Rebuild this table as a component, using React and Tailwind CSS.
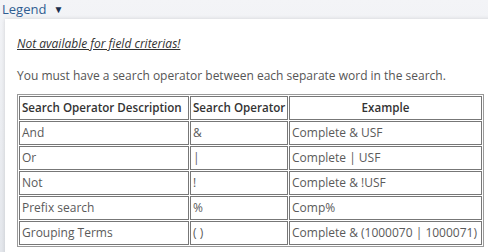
// Légende des opérateurs de recherche
const lignes = [
  { desc: "And", op: "&", ex: "Complete & USF" },
  { desc: "Or", op: "|", ex: "Complete | USF" },
  { desc: "Not", op: "!", ex: "Complete & !USF" },
  { desc: "Prefix search", op: "%", ex: "Comp%" },
  { desc: "Grouping Terms", op: "( )", ex: "Complete & (1000070 | 1000071)" },
];

export default function App() {
  return (
    <div
      className="w-[488px] h-[252px] overflow-hidden bg-gradient-to-b from-[#f3f4f7] to-[#e4e7ec]"
      style={{ fontFamily: '"Open Sans", sans-serif' }}
    >
      {/* Titre repliable */}
      <div className="flex items-center h-[19px] pl-[2px] text-[13px] text-[#2f5d92]">
        <span>Legend</span>
        <span className="ml-[7px] text-[10px] text-[#1a2f4f]">▼</span>
      </div>

      {/* Carte blanche */}
      <div className="ml-[5px] w-[500px] bg-white shadow-[0_0_4px_rgba(0,0,0,0.14)] pl-[12px] pt-[17px] pb-[10px]">
        <p className="text-[12px] leading-[16px] italic underline text-[#333]">
          Not available for field criterias!
        </p>
        <p className="mt-[16px] text-[12px] leading-[16px] text-[#555]">
          You must have a search operator between each separate word in the search.
        </p>

        <table className="mt-[10px] w-[467px] table-fixed border-separate border-spacing-[1px] border border-[#9a9a9a] text-[12px]">
          <colgroup>
            <col className="w-[170px]" />
            <col className="w-[98px]" />
            <col className="w-[193px]" />
          </colgroup>
          <thead>
            <tr>
              <th className="h-[24px] border border-[#777] px-[2px] text-left text-[11.6px] font-semibold text-[#333] whitespace-nowrap">
                Search Operator Description
              </th>
              <th className="h-[24px] border border-[#777] px-[2px] text-left text-[11.6px] font-semibold text-[#333] whitespace-nowrap">
                Search Operator
              </th>
              <th className="h-[24px] border border-[#777] px-[2px] text-center text-[11.6px] font-semibold text-[#333]">
                Example
              </th>
            </tr>
          </thead>
          <tbody>
            {lignes.map((l) => (
              <tr key={l.desc}>
                <td className="h-[24px] border border-[#777] px-[2px] text-[#5a5a5a]">{l.desc}</td>
                <td className="h-[24px] border border-[#777] px-[2px] text-[#5a5a5a]">{l.op}</td>
                <td className="h-[24px] border border-[#777] px-[2px] text-[#5a5a5a] whitespace-nowrap">{l.ex}</td>
              </tr>
            ))}
          </tbody>
        </table>
      </div>
    </div>
  );
}
